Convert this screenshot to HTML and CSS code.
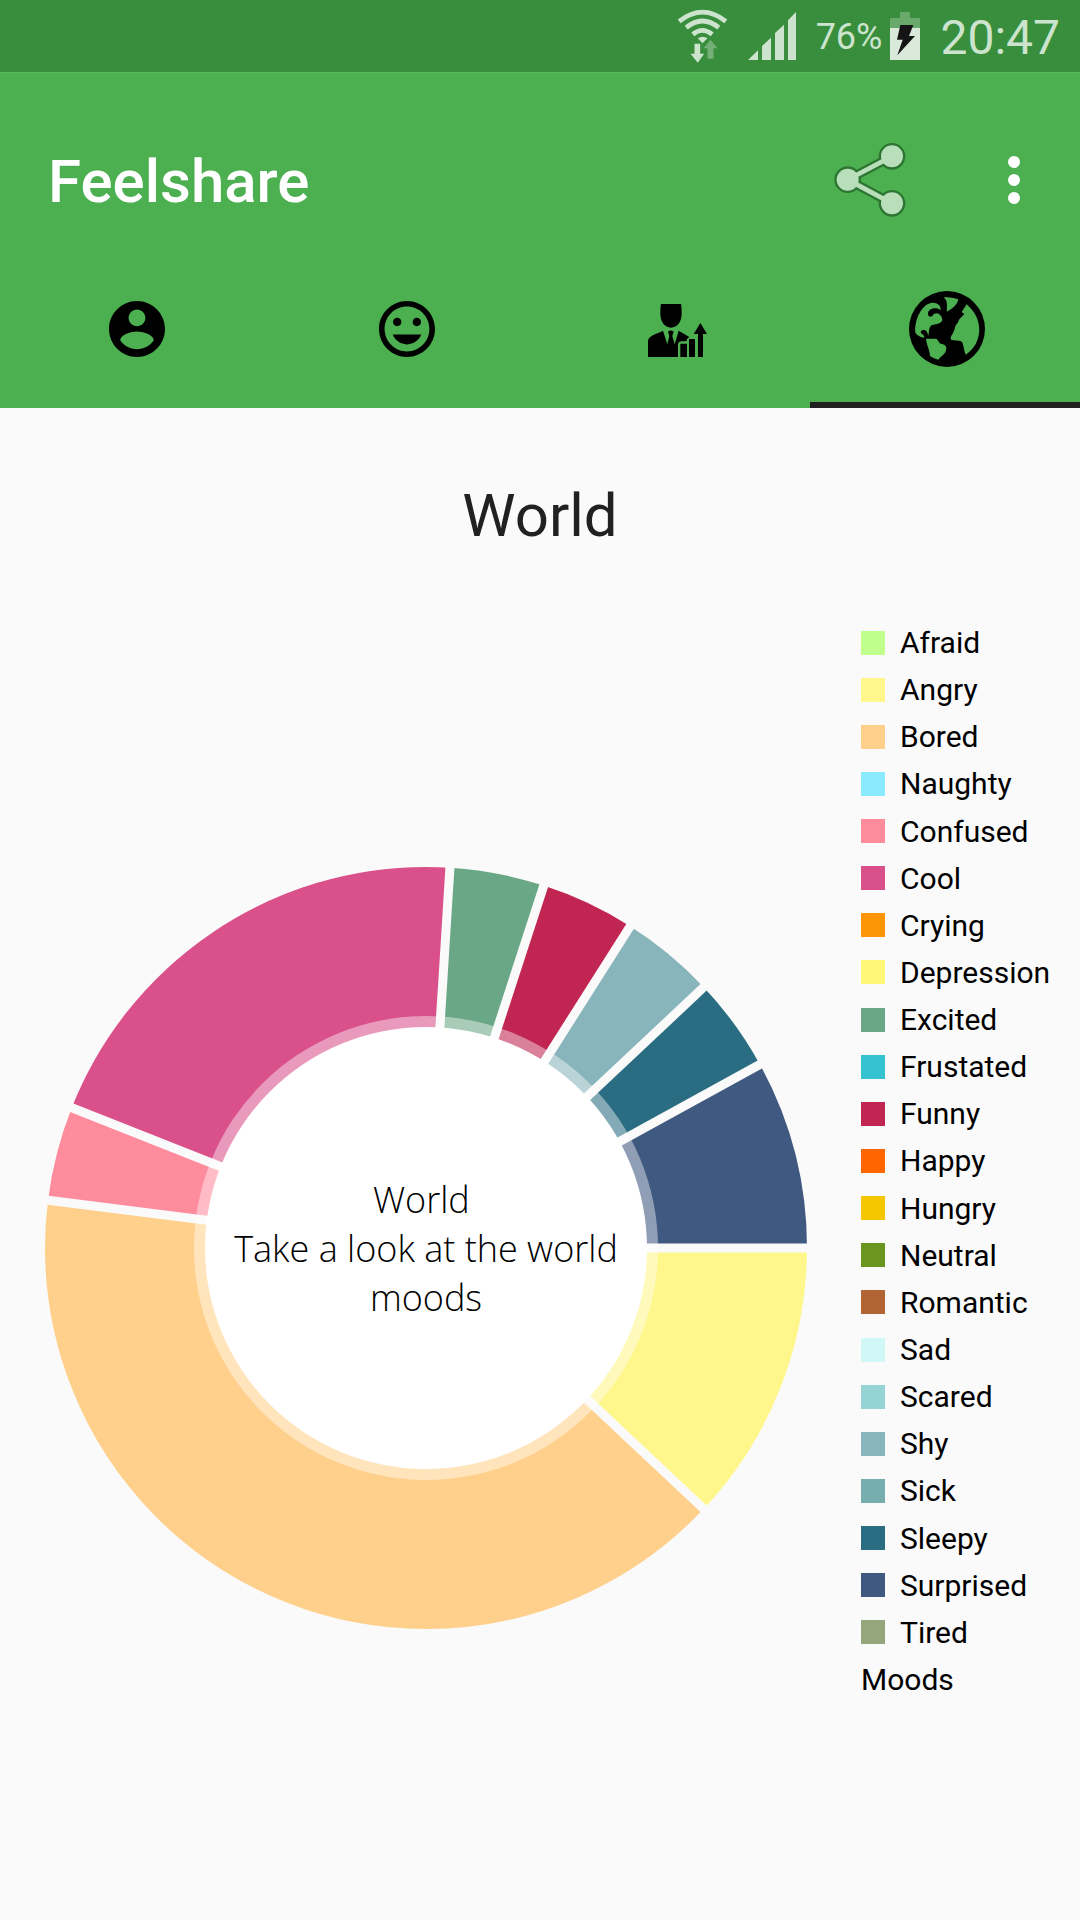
FILE: index.html
```html
<!DOCTYPE html>
<html lang="en">
<head>
<meta charset="utf-8">
<meta name="viewport" content="width=device-width, initial-scale=1">
<title>Feelshare</title>
<link rel="stylesheet" href="styles.css">
</head>
<body>
<div class="status-bar">
  <svg class="icon-wifi" viewBox="50 25 152 162" aria-hidden="true">
    <g fill="none" stroke="#cce4cd" stroke-width="14">
      <path d="M56 62Q126 7 196 62"/>
      <path d="M77 81Q126 41 175 81"/>
      <path d="M97 101Q126 77 155 101"/>
    </g>
    <path d="M112 113Q126 103 141 113L126 128Z" fill="#cce4cd"/>
    <path d="M102 129H119V159H131L112 186L90 159H102Z" fill="#cce4cd"/>
    <path d="M150 117L171 143H159V174H141V143H129Z" fill="#74af77"/>
  </svg>
  <svg class="icon-signal" viewBox="270 36 144 144" aria-hidden="true">
    <path fill="#cce4cd" d="M270 180L300 151V180ZM312 180V138L339 113V180ZM351 180V99L378 74V180ZM390 180V61L414 36V180Z"/>
  </svg>
  <div class="battery">
    <span class="battery-level">76%</span>
    <svg class="icon-battery" viewBox="696 33 90 144" aria-hidden="true">
      <path fill="#69a96c" d="M726 33H756V51H786V81H696V51H726Z"/>
      <path fill="#d9e9da" d="M696 81H786V177H696Z"/>
      <path fill="#151515" d="M727 72H766L753 105H771L718 163L734 116H717Z"/>
    </svg>
  </div>
  <time class="clock">20:47</time>
</div>

<header class="app-bar">
  <div class="toolbar">
    <h1 class="app-title">Feelshare</h1>
    <button class="tool-button" type="button" aria-label="Share">
      <svg class="icon-share" viewBox="105 95 216 228" aria-hidden="true">
        <g fill="#2d7532" stroke="#2d7532" stroke-width="28">
          <path fill="none" d="M279 138L146 208L279 279"/>
          <circle cx="146" cy="208" r="26"/><circle cx="279" cy="138" r="26"/><circle cx="279" cy="279" r="26"/>
        </g>
        <path fill="none" stroke="#b8dfba" stroke-width="14" d="M279 138L146 208L279 279"/>
        <g fill="#b8dfba"><circle cx="146" cy="208" r="33"/><circle cx="279" cy="138" r="33"/><circle cx="279" cy="279" r="33"/></g>
      </svg>
    </button>
    <button class="tool-button" type="button" aria-label="More options">
      <svg class="icon-more" viewBox="0 0 12 48" aria-hidden="true">
        <circle cx="6" cy="6" r="6"/><circle cx="6" cy="24" r="6"/><circle cx="6" cy="42" r="6"/>
      </svg>
    </button>
  </div>
  <nav class="tabs">
    <a class="tab" href="#profile" aria-label="Profile">
      <svg class="icon-tab" viewBox="2 2 20 20" aria-hidden="true"><path d="M12 2C6.48 2 2 6.48 2 12s4.48 10 10 10 10-4.480 10-10S17.520 2 12 2zm0 3c1.660 0 3 1.340 3 3s-1.340 3-3 3-3-1.340-3-3 1.340-3 3-3zm0 14.200c-2.500 0-4.710-1.280-6-3.220.030-1.990 4-3.080 6-3.080 1.990 0 5.970 1.090 6 3.080-1.290 1.940-3.500 3.220-6 3.220z"/></svg>
    </a>
    <a class="tab" href="#mood" aria-label="Mood">
      <svg class="icon-tab" viewBox="2 2 20 20" aria-hidden="true"><path d="M11.990 2C6.470 2 2 6.480 2 12s4.470 10 9.990 10C17.520 22 22 17.520 22 12S17.520 2 11.990 2zM12 20c-4.420 0-8-3.580-8-8s3.580-8 8-8 8 3.580 8 8-3.580 8-8 8zm3.500-9c.830 0 1.500-.670 1.500-1.500S16.330 8 15.500 8 14 8.670 14 9.500s.670 1.500 1.500 1.500zm-7 0c.830 0 1.500-.670 1.500-1.500S9.330 8 8.500 8 7 8.670 7 9.500 7.670 11 8.500 11zm3.500 6.500c2.330 0 4.310-1.460 5.110-3.500H6.890c.800 2.040 2.780 3.500 5.110 3.500z"/></svg>
    </a>
    <a class="tab" href="#statistics" aria-label="My statistics">
      <svg class="icon-stats" viewBox="54 60 177 171" aria-hidden="true">
        <path d="M93 72H153Q155 80 155 100C155 126 142 143 123 143C104 143 91 126 91 100Q91 80 93 72Z"/>
        <path d="M54 231V183C56 165 80 163 99 152L112 193L118 168L114 155Q122 148 131 155L127 168L134 193L146 152L178 171Q170 175 169 184H155Q145 184 144 194V231Z"/>
        <path d="M151 191H171V231H151ZM177 177H195V231H177ZM204 231V162H191L211 129L231 162H219V231Z"/>
      </svg>
    </a>
    <a class="tab tab-active" href="#world" aria-label="World" aria-current="page">
      <svg class="icon-world" viewBox="329 61 228 228" aria-hidden="true">
        <circle cx="443" cy="175" r="114"/>
        <g fill="#4caf50">
          <path d="M348 186C345 145 368 98 400 96C415 96 426 106 424 118C408 108 386 114 386 130C388 143 400 138 403 130C416 122 428 135 429 147C428 158 412 160 398 163C386 170 391 185 386 197C386 180 375 174 365 181C361 191 376 189 375 201C365 200 352 193 348 186Z"/>
          <path d="M433 80Q455 78 477 86C475 100 460 115 442 123C444 108 443 95 440 88Z"/>
          <path d="M502 101C560 150 545 225 499 252C492 235 493 213 483 211C470 209 459 211 454 205C453 194 464 190 468 166L476 155L480 146L495 130L487 124Z"/>
          <path d="M380 204H410C418 207 418 218 425 219C435 221 442 225 441 234C440 250 425 255 417 267Q402 264 392 256C391 235 382 225 380 204Z"/>
        </g>
      </svg>
    </a>
  </nav>
</header>

<main class="content">
  <h2 class="page-title">World</h2>
  <section class="chart">
    <figure class="donut">
      <svg class="donut-ring" viewBox="0 0 762 762" role="img" aria-label="World moods">
        <g class="slices">
          <circle cx="381" cy="381" r="300" pathLength="25" stroke="#fff68c" stroke-dasharray="3 22"/>
          <circle cx="381" cy="381" r="300" pathLength="25" stroke="#ffd08c" stroke-dasharray="10 15" stroke-dashoffset="-3"/>
          <circle cx="381" cy="381" r="300" pathLength="25" stroke="#ff8c9d" stroke-dasharray="1 24" stroke-dashoffset="-13"/>
          <circle cx="381" cy="381" r="300" pathLength="25" stroke="#d9508a" stroke-dasharray="5 20" stroke-dashoffset="-14"/>
          <circle cx="381" cy="381" r="300" pathLength="25" stroke="#6aa786" stroke-dasharray="1 24" stroke-dashoffset="-19"/>
          <circle cx="381" cy="381" r="300" pathLength="25" stroke="#c12552" stroke-dasharray="1 24" stroke-dashoffset="-20"/>
          <circle cx="381" cy="381" r="300" pathLength="25" stroke="#88b4bb" stroke-dasharray="1 24" stroke-dashoffset="-21"/>
          <circle cx="381" cy="381" r="300" pathLength="25" stroke="#2a6d82" stroke-dasharray="1 24" stroke-dashoffset="-22"/>
          <circle cx="381" cy="381" r="300" pathLength="25" stroke="#405980" stroke-dasharray="2 23" stroke-dashoffset="-23"/>
        </g>
        <g class="dividers">
          <path d="M381 381H764"/>
          <path d="M381 381H764" transform="rotate(43.2 381 381)"/>
          <path d="M381 381H764" transform="rotate(187.2 381 381)"/>
          <path d="M381 381H764" transform="rotate(201.6 381 381)"/>
          <path d="M381 381H764" transform="rotate(273.6 381 381)"/>
          <path d="M381 381H764" transform="rotate(288 381 381)"/>
          <path d="M381 381H764" transform="rotate(302.4 381 381)"/>
          <path d="M381 381H764" transform="rotate(316.8 381 381)"/>
          <path d="M381 381H764" transform="rotate(331.2 381 381)"/>
        </g>
        <circle cx="381" cy="381" r="232" fill="#fff" fill-opacity=".42"/>
        <circle cx="381" cy="381" r="221" fill="#fff"/>
      </svg>
      <figcaption class="donut-text">World&nbsp;<br>Take a look at the world<br>moods</figcaption>
    </figure>
    <ul class="legend">
      <li><span class="swatch afraid"></span>Afraid</li>
      <li><span class="swatch angry"></span>Angry</li>
      <li><span class="swatch bored"></span>Bored</li>
      <li><span class="swatch naughty"></span>Naughty</li>
      <li><span class="swatch confused"></span>Confused</li>
      <li><span class="swatch cool"></span>Cool</li>
      <li><span class="swatch crying"></span>Crying</li>
      <li><span class="swatch depression"></span>Depression</li>
      <li><span class="swatch excited"></span>Excited</li>
      <li><span class="swatch frustated"></span>Frustated</li>
      <li><span class="swatch funny"></span>Funny</li>
      <li><span class="swatch happy"></span>Happy</li>
      <li><span class="swatch hungry"></span>Hungry</li>
      <li><span class="swatch neutral"></span>Neutral</li>
      <li><span class="swatch romantic"></span>Romantic</li>
      <li><span class="swatch sad"></span>Sad</li>
      <li><span class="swatch scared"></span>Scared</li>
      <li><span class="swatch shy"></span>Shy</li>
      <li><span class="swatch sick"></span>Sick</li>
      <li><span class="swatch sleepy"></span>Sleepy</li>
      <li><span class="swatch surprised"></span>Surprised</li>
      <li><span class="swatch tired"></span>Tired</li>
      <li>Moods</li>
    </ul>
  </section>
</main>
</body>
</html>
```
FILE: styles.css
```css
* { box-sizing: border-box; }

body {
  margin: 0;
  min-height: 100vh;
  background: #fafafa;
  color: #000;
  font-family: Roboto, sans-serif;
}

svg { display: block; }

/* Status bar */
.status-bar {
  display: flex;
  align-items: center;
  justify-content: flex-end;
  gap: 20px;
  height: 72px;
  padding-right: 20px;
  background: #388e3c;
  color: #cce4cd;
}

.icon-wifi { width: 51px; height: 54px; }
.icon-signal { width: 48px; height: 48px; }
.icon-battery { width: 30px; height: 48px; }
.battery { display: flex; align-items: center; gap: 8px; }
.battery-level { padding-top: 2px; font-size: 36px; }
.clock { padding-top: 2px; font-size: 48px; }

/* App bar */
.app-bar {
  padding-top: 24px;
  background: #4caf50;
  box-shadow: inset 0 1px #5ab75e;
}

.toolbar {
  display: flex;
  align-items: center;
  gap: 72px;
  height: 168px;
  padding: 0 30px 0 48px;
}

.app-title {
  flex: 1;
  margin: 0;
  padding-top: 4px;
  color: #fff;
  font-size: 60px;
  font-weight: 500;
  line-height: 72px;
}

.tool-button {
  display: grid;
  place-items: center;
  width: 72px;
  height: 76px;
  padding: 0;
  border: 0;
  background: none;
}

.icon-share { width: 72px; height: 76px; }
.icon-more { width: 12px; height: 48px; fill: #fff; }

.tabs {
  display: grid;
  grid-template-columns: repeat(4, 1fr);
}

.tab {
  display: grid;
  place-items: center;
  height: 144px;
  padding: 0 0 9px 4px;
  border-bottom: 6px solid transparent;
}

.tab-active { border-color: #212121; }
.icon-tab { width: 56px; height: 56px; }
.icon-stats { width: 59px; height: 57px; }
.icon-world { width: 76px; height: 76px; }

/* Content */
.content { padding-top: 72px; }

.page-title {
  margin: 0;
  color: #212121;
  font-size: 60px;
  font-weight: 400;
  line-height: 72px;
  text-align: center;
}

.chart {
  display: grid;
  grid-template-columns: 1fr 219px;
  gap: 54px;
  align-items: start;
  padding: 67px 0 67px 45px;
}

.donut {
  display: grid;
  place-items: center;
  margin: 248px 0 0;
}

.donut-ring,
.donut-text { grid-area: 1 / 1; }

.donut-ring { width: 100%; height: auto; }
.slices { fill: none; stroke-width: 162; }
.dividers { stroke: #fafafa; stroke-width: 9; }

.donut-text {
  font-family: "Open Sans", sans-serif;
  font-size: 36px;
  font-weight: 300;
  line-height: 49px;
  text-align: center;
}

.legend {
  display: grid;
  grid-auto-rows: 1fr;
  min-height: 1084px;
  margin: 0;
  padding: 0;
  list-style: none;
  font-size: 30px;
}

.legend li {
  display: flex;
  align-items: center;
  gap: 15px;
}

.swatch { width: 24px; height: 24px; }

.afraid { background: #c0ff8c; }
.angry { background: #fff68c; }
.bored { background: #ffd08c; }
.naughty { background: #8ceaff; }
.confused { background: #ff8c9d; }
.cool { background: #d9508a; }
.crying { background: #fe9507; }
.depression { background: #fef778; }
.excited { background: #6aa786; }
.frustated { background: #35c2d1; }
.funny { background: #c12552; }
.happy { background: #ff6600; }
.hungry { background: #f5c700; }
.neutral { background: #6a961f; }
.romantic { background: #b36435; }
.sad { background: #cff8f6; }
.scared { background: #94d4d4; }
.shy { background: #88b4bb; }
.sick { background: #76aeaf; }
.sleepy { background: #2a6d82; }
.surprised { background: #405980; }
.tired { background: #95a57c; }
```
